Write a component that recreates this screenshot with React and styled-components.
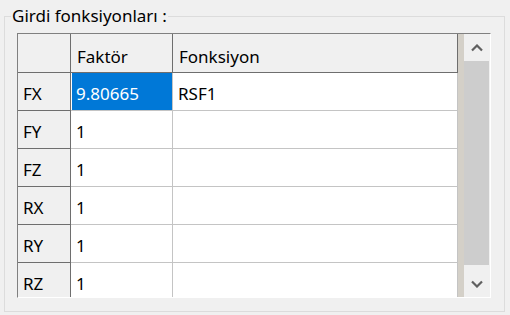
import React from 'react'
import styled, { createGlobalStyle } from 'styled-components'

const GlobalStyle = createGlobalStyle`
  html, body {
    margin: 0;
    background: #f0f0f0;
  }
  body {
    font-family: "Noto Sans", "DejaVu Sans", sans-serif;
    color: #000;
  }
`;

const Page = styled.div`
  width: 510px;
  height: 315px;
  box-sizing: border-box;
  padding: 4px 5px 3px 4px;
`;

const Group = styled.fieldset`
  margin: 0;
  border: 1px solid #dcdcdc;
  padding: 5px 13px 13px 12px;
  min-width: 0;
`;

const Legend = styled.legend`
  font-size: 17px;
  line-height: 24px;
  padding: 0 1px;
  margin-left: -6px;
`;

const Frame = styled.div`
  height: 263px;
  display: flex;
  border-top: 1px solid #808080;
  border-left: 1px solid #808080;
  border-right: 1px solid #ffffff;
  border-bottom: 1px solid #ffffff;
`;

const GridArea = styled.div`
  flex: 1;
  background: #d4d0c8;
  overflow: hidden;
`;

const Grid = styled.div`
  display: grid;
  grid-template-columns: 53px 102px 285px;
  grid-template-rows: 39px;
  grid-auto-rows: 38px;
  width: 440px;
  font-size: 17px;
`;

const Cell = styled.div`
  box-sizing: border-box;
  display: flex;
  align-items: center;
  padding: ${p => (p.$top ? '6px 0 0 6px' : '4px 0 0 5px')};
  white-space: nowrap;
  background: ${p => (p.$selected ? '#0078d7' : p.$head ? '#f0f0f0' : '#ffffff')};
  color: ${p => (p.$selected ? '#ffffff' : '#000000')};
  border-right: 1px solid ${p => (p.$head ? '#6e6e6e' : '#c4c4c4')};
  border-bottom: 1px solid ${p => (p.$head ? '#6e6e6e' : '#c4c4c4')};
  box-shadow: ${p => (p.$selected ? 'inset 1px 0 0 #ffffff' : 'none')};
`;

const Row = styled.div`
  display: contents;
`;

const Scrollbar = styled.div`
  width: 26px;
  display: flex;
  flex-direction: column;
  background: #f0f0f0;
`;

const ArrowButton = styled.div`
  height: ${p => p.$h}px;
  flex: ${p => (p.$grow ? 1 : 'none')};
  display: flex;
  align-items: center;
  justify-content: center;
  padding-top: ${p => p.$pt || 0}px;
  box-sizing: border-box;
`;

const Thumb = styled.div`
  height: 204px;
  margin-right: 1px;
  background: #cdcdcd;
`;

const Chevron = ({ down }) => (
  <svg width="12" height="8" viewBox="0 0 12 8">
    <polyline
      points={down ? '1,1.5 6,6.5 11,1.5' : '1,6.5 6,1.5 11,6.5'}
      fill="none"
      stroke="#606060"
      strokeWidth="2.2"
    />
  </svg>
);

const rows = [
  { name: 'FX', factor: '9.80665', fn: 'RSF1', selected: true },
  { name: 'FY', factor: '1', fn: '' },
  { name: 'FZ', factor: '1', fn: '' },
  { name: 'RX', factor: '1', fn: '' },
  { name: 'RY', factor: '1', fn: '' },
  { name: 'RZ', factor: '1', fn: '' },
];

export default function App() {
  return (
    <Page>
      <GlobalStyle />
      <Group>
        <Legend>Girdi fonksiyonları :</Legend>
        <Frame>
          <GridArea>
            <Grid>
              <Row>
                <Cell $head $top />
                <Cell $head $top>Faktör</Cell>
                <Cell $head $top>Fonksiyon</Cell>
              </Row>
              {rows.map(r => (
                <Row key={r.name}>
                  <Cell $head>{r.name}</Cell>
                  <Cell $selected={r.selected}>{r.factor}</Cell>
                  <Cell>{r.fn}</Cell>
                </Row>
              ))}
            </Grid>
          </GridArea>
          <Scrollbar>
            <ArrowButton $h={27}>
              <Chevron />
            </ArrowButton>
            <Thumb />
            <ArrowButton $grow $pt={5}>
              <Chevron down />
            </ArrowButton>
          </Scrollbar>
        </Frame>
      </Group>
    </Page>
  )
}
